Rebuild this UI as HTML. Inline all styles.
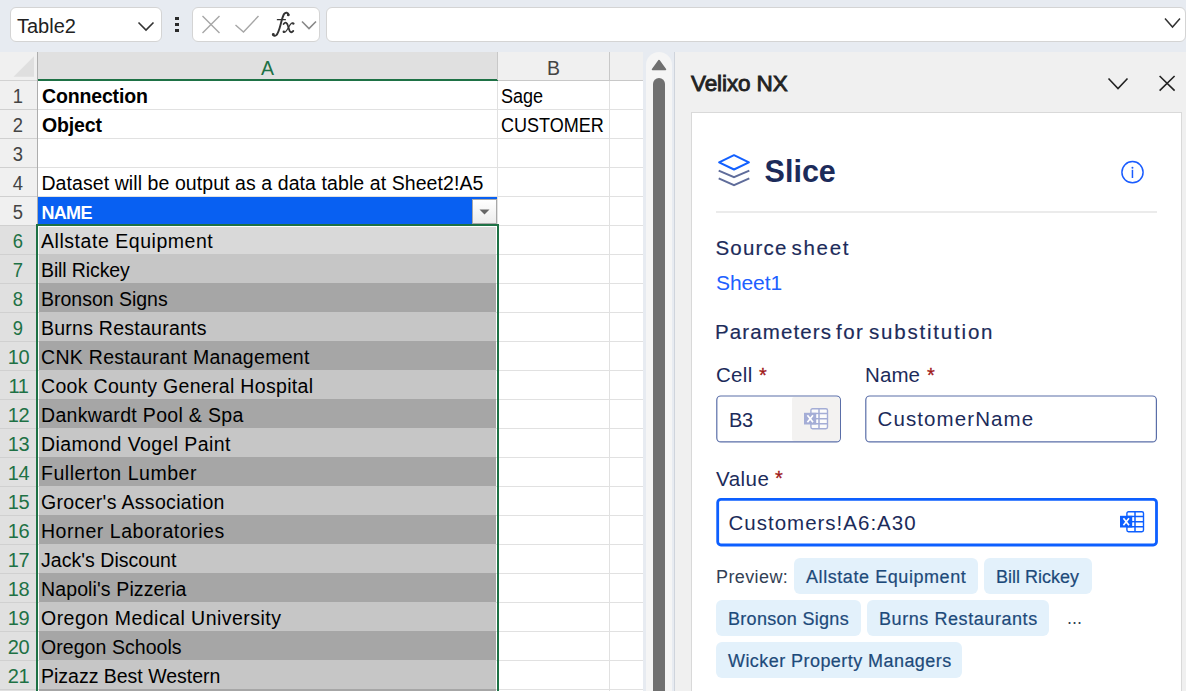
<!DOCTYPE html><html><head><meta charset="utf-8"><title>Excel</title><style>
*{box-sizing:border-box;margin:0;padding:0}
html,body{width:1186px;height:691px;overflow:hidden;background:#fff;font-family:"Liberation Sans",sans-serif;}
.abs{position:absolute}
#fb{position:absolute;left:0;top:0;width:1186px;height:52px;background:#e7ebf1}
.box{position:absolute;top:7px;height:35px;background:#fff;border:1px solid #d4d4d4;border-radius:6px}
#grid{position:absolute;left:0;top:52px;width:675px;height:639px;background:#e7ebf1;overflow:hidden}
.t{position:absolute;white-space:nowrap;line-height:1}
.rn{position:absolute;left:0;width:37px;text-align:center;font-size:20px;letter-spacing:-0.4px;line-height:30px;color:#444}
.rn.sel{color:#1e7145}
.cell{position:absolute;white-space:nowrap;font-size:19.5px;line-height:30px;color:#000}
.hl{position:absolute;height:1px;background:#e1e1e1}
.vl{position:absolute;width:1px;background:#e1e1e1}
#panel{position:absolute;left:675px;top:52px;width:511px;height:639px;background:#f0f0f0}
#card{position:absolute;left:691px;top:112px;width:491px;height:600px;background:#fff;border:1px solid #d9d9d9}
.lbl{position:absolute;white-space:nowrap;color:#1c2b5a;line-height:1}
.med{-webkit-text-stroke:0.18px #1c2b5a}
.ast{color:#a01818;font-size:20px;-webkit-text-stroke:0.3px #a01818}
.chip{position:absolute;height:35.5px;background:#e3f1fb;border-radius:6px;color:#1d4a7a;font-size:18px;line-height:38px;white-space:nowrap;padding-left:12px;overflow:hidden;-webkit-text-stroke:0.2px #1d4a7a}
</style></head><body>
<div id="fb">
<div class="box" style="left:10px;width:152px"></div>
<div class="t" style="left:17px;top:15.7px;font-size:20px;color:#222">Table2</div>
<svg class="abs" style="left:136px;top:18px" width="20" height="16" viewBox="0 0 20 16"><path d="M2.5 4.5 L10 12 L17.5 4.5" fill="none" stroke="#333" stroke-width="1.6"/></svg>
<div class="abs" style="left:175px;top:17.1px;width:4px;height:2.8px;background:#2a2a2a"></div><div class="abs" style="left:175px;top:23.2px;width:4px;height:2.8px;background:#2a2a2a"></div><div class="abs" style="left:175px;top:29.3px;width:4px;height:2.8px;background:#2a2a2a"></div>
<div class="box" style="left:192px;width:128px"></div>
<svg class="abs" style="left:200px;top:14px" width="22" height="22" viewBox="0 0 22 22"><path d="M2.5 2 L19.5 19 M19.5 2 L2.5 19" fill="none" stroke="#a6a6a6" stroke-width="1.4"/></svg>
<svg class="abs" style="left:234px;top:14px" width="26" height="22" viewBox="0 0 26 22"><path d="M1.5 11 L9.5 18 L24.5 2" fill="none" stroke="#a6a6a6" stroke-width="1.4"/></svg>
<svg class="abs" style="left:0;top:0" width="330" height="52" viewBox="0 0 330 52"><g fill="none" stroke="#333" stroke-linecap="round"><path d="M288.4 14.6 C288.2 12.6 285.6 11.9 284.2 13.9 C282.6 16.2 281.8 20 280.6 24.5 C279.4 29 278.3 33.3 276.3 35.1 C274.9 36.3 273.2 35.9 273 34.6" stroke-width="1.9"/><path d="M277.4 19.7 L285.4 19.7" stroke-width="1.3"/><path d="M283.6 24 C285.4 21.7 287.2 22.6 287.9 25.5 L289.2 29.8 C289.9 32.5 291.6 33.1 293.3 30.9" stroke-width="1.8"/><path d="M293.4 23.4 C292 22 290.6 23.6 288.6 27.2 C286.6 30.8 285 33.2 283.6 31.8" stroke-width="1.2"/></g><circle cx="288.3" cy="14.9" r="1.4" fill="#333"/><circle cx="273.3" cy="34.5" r="1.4" fill="#333"/><circle cx="293.3" cy="23.6" r="1.2" fill="#333"/><circle cx="283.8" cy="31.7" r="1.2" fill="#333"/></svg>
<svg class="abs" style="left:300px;top:18px" width="18" height="14" viewBox="0 0 18 14"><path d="M2 3.5 L9 10.5 L16 3.5" fill="none" stroke="#888" stroke-width="1.6"/></svg>
<div class="box" style="left:326px;width:859.5px"></div>
<svg class="abs" style="left:1163px;top:16px" width="20" height="14" viewBox="0 0 20 14"><path d="M2 2.5 L9.5 11 L17 2.5" fill="none" stroke="#333" stroke-width="1.5"/></svg>
</div>
<div id="grid">
<div class="abs" style="left:0;top:0;width:643px;height:639px;background:#fff"></div>
<div class="abs" style="left:0;top:0;width:643px;height:28px;background:#f0f0f0"></div>
<div class="abs" style="left:38px;top:0;width:459px;height:27px;background:#e0e0e0"></div>
<div class="abs" style="left:37px;top:27px;width:461px;height:2px;background:#1e7145"></div>
<div class="abs" style="left:498px;top:28px;width:145px;height:1px;background:#c8c8c8"></div>
<svg class="abs" style="left:13px;top:4px" width="22" height="22" viewBox="0 0 22 22"><path d="M21 0.3 L21 20.8 L0.5 20.8 Z" fill="#dfdfdf"/></svg>
<div class="abs" style="left:0;top:29px;width:37px;height:610px;background:#f0f0f0"></div>
<div class="abs" style="left:0;top:174px;width:37px;height:465px;background:#e0e0e0"></div>
<div class="abs" style="left:37px;top:0;width:1px;height:172px;background:#adadad"></div>
<div class="abs" style="left:0;top:28px;width:37px;height:1px;background:#d2d2d2"></div>
<div class="abs" style="left:497px;top:0;width:1px;height:28px;background:#c8c8c8"></div>
<div class="abs" style="left:609px;top:0;width:1px;height:28px;background:#c8c8c8"></div>
<div class="t" style="left:38px;width:459px;text-align:center;top:7px;font-size:19.5px;color:#1e7145">A</div>
<div class="t" style="left:498px;width:111px;text-align:center;top:7px;font-size:19.5px;color:#444">B</div>
<div class="hl" style="left:0;top:57px;width:37px;background:#d0d0d0"></div>
<div class="hl" style="left:38px;top:57px;width:605px"></div>
<div class="hl" style="left:0;top:86px;width:37px;background:#d0d0d0"></div>
<div class="hl" style="left:38px;top:86px;width:605px"></div>
<div class="hl" style="left:0;top:115px;width:37px;background:#d0d0d0"></div>
<div class="hl" style="left:38px;top:115px;width:605px"></div>
<div class="hl" style="left:0;top:144px;width:37px;background:#d0d0d0"></div>
<div class="hl" style="left:38px;top:144px;width:605px"></div>
<div class="hl" style="left:0;top:173px;width:37px;background:#d0d0d0"></div>
<div class="hl" style="left:38px;top:173px;width:605px"></div>
<div class="hl" style="left:0;top:202px;width:37px;background:#d0d0d0"></div>
<div class="hl" style="left:38px;top:202px;width:605px"></div>
<div class="hl" style="left:0;top:231px;width:37px;background:#d0d0d0"></div>
<div class="hl" style="left:38px;top:231px;width:605px"></div>
<div class="hl" style="left:0;top:260px;width:37px;background:#d0d0d0"></div>
<div class="hl" style="left:38px;top:260px;width:605px"></div>
<div class="hl" style="left:0;top:289px;width:37px;background:#d0d0d0"></div>
<div class="hl" style="left:38px;top:289px;width:605px"></div>
<div class="hl" style="left:0;top:318px;width:37px;background:#d0d0d0"></div>
<div class="hl" style="left:38px;top:318px;width:605px"></div>
<div class="hl" style="left:0;top:347px;width:37px;background:#d0d0d0"></div>
<div class="hl" style="left:38px;top:347px;width:605px"></div>
<div class="hl" style="left:0;top:376px;width:37px;background:#d0d0d0"></div>
<div class="hl" style="left:38px;top:376px;width:605px"></div>
<div class="hl" style="left:0;top:405px;width:37px;background:#d0d0d0"></div>
<div class="hl" style="left:38px;top:405px;width:605px"></div>
<div class="hl" style="left:0;top:434px;width:37px;background:#d0d0d0"></div>
<div class="hl" style="left:38px;top:434px;width:605px"></div>
<div class="hl" style="left:0;top:463px;width:37px;background:#d0d0d0"></div>
<div class="hl" style="left:38px;top:463px;width:605px"></div>
<div class="hl" style="left:0;top:492px;width:37px;background:#d0d0d0"></div>
<div class="hl" style="left:38px;top:492px;width:605px"></div>
<div class="hl" style="left:0;top:521px;width:37px;background:#d0d0d0"></div>
<div class="hl" style="left:38px;top:521px;width:605px"></div>
<div class="hl" style="left:0;top:550px;width:37px;background:#d0d0d0"></div>
<div class="hl" style="left:38px;top:550px;width:605px"></div>
<div class="hl" style="left:0;top:579px;width:37px;background:#d0d0d0"></div>
<div class="hl" style="left:38px;top:579px;width:605px"></div>
<div class="hl" style="left:0;top:608px;width:37px;background:#d0d0d0"></div>
<div class="hl" style="left:38px;top:608px;width:605px"></div>
<div class="hl" style="left:0;top:637px;width:37px;background:#d0d0d0"></div>
<div class="hl" style="left:38px;top:637px;width:605px"></div>
<div class="vl" style="left:497px;top:29px;height:610px"></div>
<div class="vl" style="left:609px;top:29px;height:610px"></div>
<div class="rn" style="top:29px;transform:translateX(-0.9px) scaleX(0.92)">1</div>
<div class="rn" style="top:58px;transform:translateX(-0.9px) scaleX(0.92)">2</div>
<div class="rn" style="top:87px;transform:translateX(-0.9px) scaleX(0.92)">3</div>
<div class="rn" style="top:116px;transform:translateX(-0.9px) scaleX(0.92)">4</div>
<div class="rn" style="top:145px;transform:translateX(-0.9px) scaleX(0.92)">5</div>
<div class="rn sel" style="top:174px;transform:translateX(-0.9px) scaleX(0.92)">6</div>
<div class="rn sel" style="top:203px;transform:translateX(-0.9px) scaleX(0.92)">7</div>
<div class="rn sel" style="top:232px;transform:translateX(-0.9px) scaleX(0.92)">8</div>
<div class="rn sel" style="top:261px;transform:translateX(-0.9px) scaleX(0.92)">9</div>
<div class="rn sel" style="top:290px">10</div>
<div class="rn sel" style="top:319px">11</div>
<div class="rn sel" style="top:348px">12</div>
<div class="rn sel" style="top:377px">13</div>
<div class="rn sel" style="top:406px">14</div>
<div class="rn sel" style="top:435px">15</div>
<div class="rn sel" style="top:464px">16</div>
<div class="rn sel" style="top:493px">17</div>
<div class="rn sel" style="top:522px">18</div>
<div class="rn sel" style="top:551px">19</div>
<div class="rn sel" style="top:580px">20</div>
<div class="rn sel" style="top:609px">21</div>
<div class="cell" style="left:42px;top:29px;font-weight:700;letter-spacing:-0.15px">Connection</div>
<div class="cell" style="left:42px;top:58px;font-weight:700;letter-spacing:-0.15px">Object</div>
<div class="cell" style="left:41.4px;top:116px;letter-spacing:0.08px">Dataset will be output as a data table at Sheet2!A5</div>
<div class="cell" style="left:501px;top:29px;transform:scaleX(0.925);transform-origin:left">Sage</div>
<div class="cell" style="left:501px;top:58px;transform:scaleX(0.925);transform-origin:left">CUSTOMER</div>
<div class="abs" style="left:38px;top:145px;width:459px;height:28px;background:#0860f2"></div>
<div class="cell" style="left:41.5px;top:146px;font-weight:700;font-size:18px;letter-spacing:-0.7px;color:#fff">NAME</div>
<div class="abs" style="left:472px;top:147px;width:25px;height:25px;background:linear-gradient(#fff,#ececec);border:1px solid #a8a8a8"></div>
<svg class="abs" style="left:479px;top:157px" width="11" height="6" viewBox="0 0 11 6"><path d="M0.5 0.5 L10.5 0.5 L5.5 5.5 Z" fill="#666"/></svg>
<div class="abs" style="left:39px;top:175px;width:457px;height:27px;background:#d9d9d9"></div>
<div class="cell" style="left:41px;top:174px;font-size:19.5px;letter-spacing:0.54px">Allstate Equipment</div>
<div class="abs" style="left:39px;top:202px;width:457px;height:29px;background:#c6c6c6"></div>
<div class="cell" style="left:41px;top:203px;font-size:19.5px;letter-spacing:-0.12px">Bill Rickey</div>
<div class="abs" style="left:39px;top:231px;width:457px;height:29px;background:#a6a6a6"></div>
<div class="cell" style="left:41px;top:232px;font-size:19.5px;letter-spacing:-0.01px">Bronson Signs</div>
<div class="abs" style="left:39px;top:260px;width:457px;height:29px;background:#c6c6c6"></div>
<div class="cell" style="left:41px;top:261px;font-size:19.5px;letter-spacing:0.25px">Burns Restaurants</div>
<div class="abs" style="left:39px;top:289px;width:457px;height:29px;background:#a6a6a6"></div>
<div class="cell" style="left:41px;top:290px;font-size:19.5px;letter-spacing:0.3px">CNK Restaurant Management</div>
<div class="abs" style="left:39px;top:318px;width:457px;height:29px;background:#c6c6c6"></div>
<div class="cell" style="left:41px;top:319px;font-size:19.5px;letter-spacing:0.32px">Cook County General Hospital</div>
<div class="abs" style="left:39px;top:347px;width:457px;height:29px;background:#a6a6a6"></div>
<div class="cell" style="left:41px;top:348px;font-size:19.5px;letter-spacing:0.32px">Dankwardt Pool &amp; Spa</div>
<div class="abs" style="left:39px;top:376px;width:457px;height:29px;background:#c6c6c6"></div>
<div class="cell" style="left:41px;top:377px;font-size:19.5px;letter-spacing:0.4px">Diamond Vogel Paint</div>
<div class="abs" style="left:39px;top:405px;width:457px;height:29px;background:#a6a6a6"></div>
<div class="cell" style="left:41px;top:406px;font-size:19.5px;letter-spacing:0.54px">Fullerton Lumber</div>
<div class="abs" style="left:39px;top:434px;width:457px;height:29px;background:#c6c6c6"></div>
<div class="cell" style="left:41px;top:435px;font-size:19.5px;letter-spacing:0.33px">Grocer's Association</div>
<div class="abs" style="left:39px;top:463px;width:457px;height:29px;background:#a6a6a6"></div>
<div class="cell" style="left:41px;top:464px;font-size:19.5px;letter-spacing:0.54px">Horner Laboratories</div>
<div class="abs" style="left:39px;top:492px;width:457px;height:29px;background:#c6c6c6"></div>
<div class="cell" style="left:41px;top:493px;font-size:19.5px;letter-spacing:0.04px">Jack's Discount</div>
<div class="abs" style="left:39px;top:521px;width:457px;height:29px;background:#a6a6a6"></div>
<div class="cell" style="left:41px;top:522px;font-size:19.5px;letter-spacing:0.12px">Napoli's Pizzeria</div>
<div class="abs" style="left:39px;top:550px;width:457px;height:29px;background:#c6c6c6"></div>
<div class="cell" style="left:41px;top:551px;font-size:19.5px;letter-spacing:0.47px">Oregon Medical University</div>
<div class="abs" style="left:39px;top:579px;width:457px;height:29px;background:#a6a6a6"></div>
<div class="cell" style="left:41px;top:580px;font-size:19.5px;letter-spacing:0.06px">Oregon Schools</div>
<div class="abs" style="left:39px;top:608px;width:457px;height:29px;background:#c6c6c6"></div>
<div class="cell" style="left:41px;top:609px;font-size:19.5px;letter-spacing:-0.01px">Pizazz Best Western</div>
<div class="abs" style="left:39px;top:637px;width:457px;height:2px;background:#a6a6a6"></div>
<div class="abs" style="left:36px;top:172px;width:463px;height:2px;background:#1e7145"></div>
<div class="abs" style="left:36px;top:172px;width:2px;height:520px;background:#1e7145"></div>
<div class="abs" style="left:497px;top:172px;width:2px;height:520px;background:#1e7145"></div>
<div class="abs" style="left:646px;top:0;width:26px;height:700px;background:#f5f5f5;border-radius:13px 13px 0 0"></div>
<svg class="abs" style="left:651px;top:7px" width="16" height="12" viewBox="0 0 16 12"><path d="M8 1.5 L14.5 10.5 L1.5 10.5 Z" fill="#707070" stroke="#707070" stroke-width="1.5" stroke-linejoin="round"/></svg>
<div class="abs" style="left:653px;top:26px;width:12px;height:700px;background:#707070;border-radius:6px"></div>
<div class="abs" style="left:674px;top:0;width:1px;height:639px;background:#cfd4dc"></div>
</div>
<div id="panel"></div>
<div class="t" style="left:691px;top:73px;font-size:22.5px;font-weight:400;color:#222;letter-spacing:-0.1px;-webkit-text-stroke:0.85px #222">Velixo NX</div>
<svg class="abs" style="left:1106px;top:74px" width="24" height="18" viewBox="0 0 24 18"><path d="M2.5 4.5 L12 14.5 L21.5 4.5" fill="none" stroke="#222" stroke-width="1.6"/></svg>
<svg class="abs" style="left:1157px;top:74px" width="20" height="20" viewBox="0 0 20 20"><path d="M2.6 2 L17.6 16.6 M17.6 2 L2.6 16.6" fill="none" stroke="#222" stroke-width="1.6"/></svg>
<div id="card"></div>
<svg class="abs" style="left:716px;top:152px" width="36" height="36" viewBox="0 0 36 36"><path d="M18 3.2 L32.9 10.3 L18 17.5 L3.1 10.3 Z" fill="none" stroke="#1260ff" stroke-width="2" stroke-linejoin="round"/><path d="M2.7 18.6 L18 25.2 L33.3 18.6" fill="none" stroke="#5f6c9a" stroke-width="1.9"/><path d="M2.7 26.3 L18 33.2 L33.3 26.3" fill="none" stroke="#5f6c9a" stroke-width="1.9"/></svg>
<div class="lbl" style="left:764.6px;top:155.5px;font-size:30.5px;font-weight:700;letter-spacing:0px">Slice</div>
<svg class="abs" style="left:1120px;top:159px" width="26" height="26" viewBox="0 0 26 26"><circle cx="12.5" cy="13.15" r="10.6" fill="none" stroke="#1a5cff" stroke-width="1.45"/><rect x="11.7" y="10.8" width="1.5" height="8.2" fill="#1a5cff"/><circle cx="12.45" cy="8.8" r="1" fill="#1a5cff"/></svg>
<div class="abs" style="left:716px;top:211.2px;width:441px;height:1.4px;background:#ebebeb"></div>
<div class="lbl med" style="left:715.5px;top:238px;font-size:20.5px;letter-spacing:1.2px">Source</div>
<div class="lbl med" style="left:791.5px;top:238px;font-size:20.5px;letter-spacing:1.7px">sheet</div>
<div class="lbl" style="left:716px;top:271.5px;font-size:21px;color:#2060ff;letter-spacing:-0.1px">Sheet1</div>
<div class="lbl med" style="left:715px;top:322px;font-size:20.5px;letter-spacing:1.12px">Parameters</div>
<div class="lbl med" style="left:836px;top:322px;font-size:20.5px;letter-spacing:1.5px">for</div>
<div class="lbl med" style="left:869px;top:322px;font-size:20.5px;letter-spacing:1.8px">substitution</div>
<div class="lbl" style="left:716px;top:365px;font-size:20.5px;letter-spacing:0.3px">Cell</div>
<div class="lbl ast" style="left:759px;top:364.7px">*</div>
<div class="lbl" style="left:865px;top:365px;font-size:20.5px;letter-spacing:0.1px">Name</div>
<div class="lbl ast" style="left:927px;top:364.7px">*</div>
<svg class="abs" style="left:700px;top:380px" width="480" height="180" viewBox="700 380 480 180"><rect x="716.8" y="396" width="123.6" height="45.9" rx="4" fill="#fff" stroke="#5a6ea8" stroke-width="1.2"/><rect x="865.8" y="396" width="290.6" height="45.9" rx="4" fill="#fff" stroke="#5a6ea8" stroke-width="1.2"/><rect x="717.7" y="499.3" width="438.8" height="45.7" rx="3.2" fill="#fff" stroke="#0d5fff" stroke-width="2.8"/></svg>
<div class="abs" style="left:792px;top:397px;width:47.7px;height:43.8px;background:#f3f2f1;border-radius:2px 3.5px 3.5px 2px"></div>
<svg class="abs" style="left:803px;top:407px" width="28" height="25" viewBox="-1 -1 28 25"><rect x="6.9" y="0.7" width="16.6" height="20" rx="1.6" fill="#fbfbfb" stroke="#a4add6" stroke-width="1.4"/><path d="M15 0.7 V20.7 M6.9 5.6 H23.5 M6.9 10.7 H23.5 M6.9 15.8 H23.5" stroke="#a4add6" stroke-width="1.5" fill="none"/><rect x="0" y="4.8" width="12.4" height="11.7" fill="#a4add6"/><path d="M3.4 7.2 L9 14.2 M9 7.2 L3.4 14.2" stroke="#fff" stroke-width="1.7" fill="none"/><rect x="12.4" y="6.4" width="1.6" height="3.4" fill="#fff" opacity="0.85"/><rect x="12.4" y="11.6" width="1.6" height="3.4" fill="#fff" opacity="0.85"/></svg>
<div class="lbl" style="left:729px;top:409.5px;font-size:20px;letter-spacing:-0.3px">B3</div>
<div class="lbl" style="left:877.5px;top:409.3px;font-size:20.5px;letter-spacing:1.1px">CustomerName</div>
<div class="lbl" style="left:716px;top:468.5px;font-size:20.5px;letter-spacing:0.5px">Value</div>
<div class="lbl ast" style="left:775px;top:467.7px">*</div>
<svg class="abs" style="left:1119px;top:510.2px" width="28" height="25" viewBox="-1 -1 28 25"><rect x="6.9" y="0.7" width="16.6" height="20" rx="1.6" fill="#fff" stroke="#0d5fff" stroke-width="1.4"/><path d="M15 0.7 V20.7 M6.9 5.6 H23.5 M6.9 10.7 H23.5 M6.9 15.8 H23.5" stroke="#0d5fff" stroke-width="1.5" fill="none"/><rect x="0" y="4.8" width="12.4" height="11.7" fill="#0d5fff"/><path d="M3.4 7.2 L9 14.2 M9 7.2 L3.4 14.2" stroke="#fff" stroke-width="1.7" fill="none"/><rect x="12.4" y="6.4" width="1.6" height="3.4" fill="#fff" opacity="0.85"/><rect x="12.4" y="11.6" width="1.6" height="3.4" fill="#fff" opacity="0.85"/></svg>
<div class="lbl" style="left:728.5px;top:513px;font-size:20.5px;letter-spacing:1.0px">Customers!A6:A30</div>
<div class="lbl" style="left:716px;top:568.2px;font-size:18px;color:#333f55;letter-spacing:0.4px">Preview:</div>
<div class="chip" style="left:794px;top:558px;width:184px;letter-spacing:0.57px">Allstate Equipment</div>
<div class="chip" style="left:984px;top:558px;width:108px;letter-spacing:0px">Bill Rickey</div>
<div class="chip" style="left:716px;top:600px;width:145px;letter-spacing:0.3px">Bronson Signs</div>
<div class="chip" style="left:867px;top:600px;width:182px;letter-spacing:0.57px">Burns Restaurants</div>
<div class="chip" style="left:716px;top:642px;width:246px;letter-spacing:0.44px">Wicker Property Managers</div>
<div class="lbl" style="left:1067px;top:609px;font-size:18px;color:#333f55">...</div>
</body></html>
